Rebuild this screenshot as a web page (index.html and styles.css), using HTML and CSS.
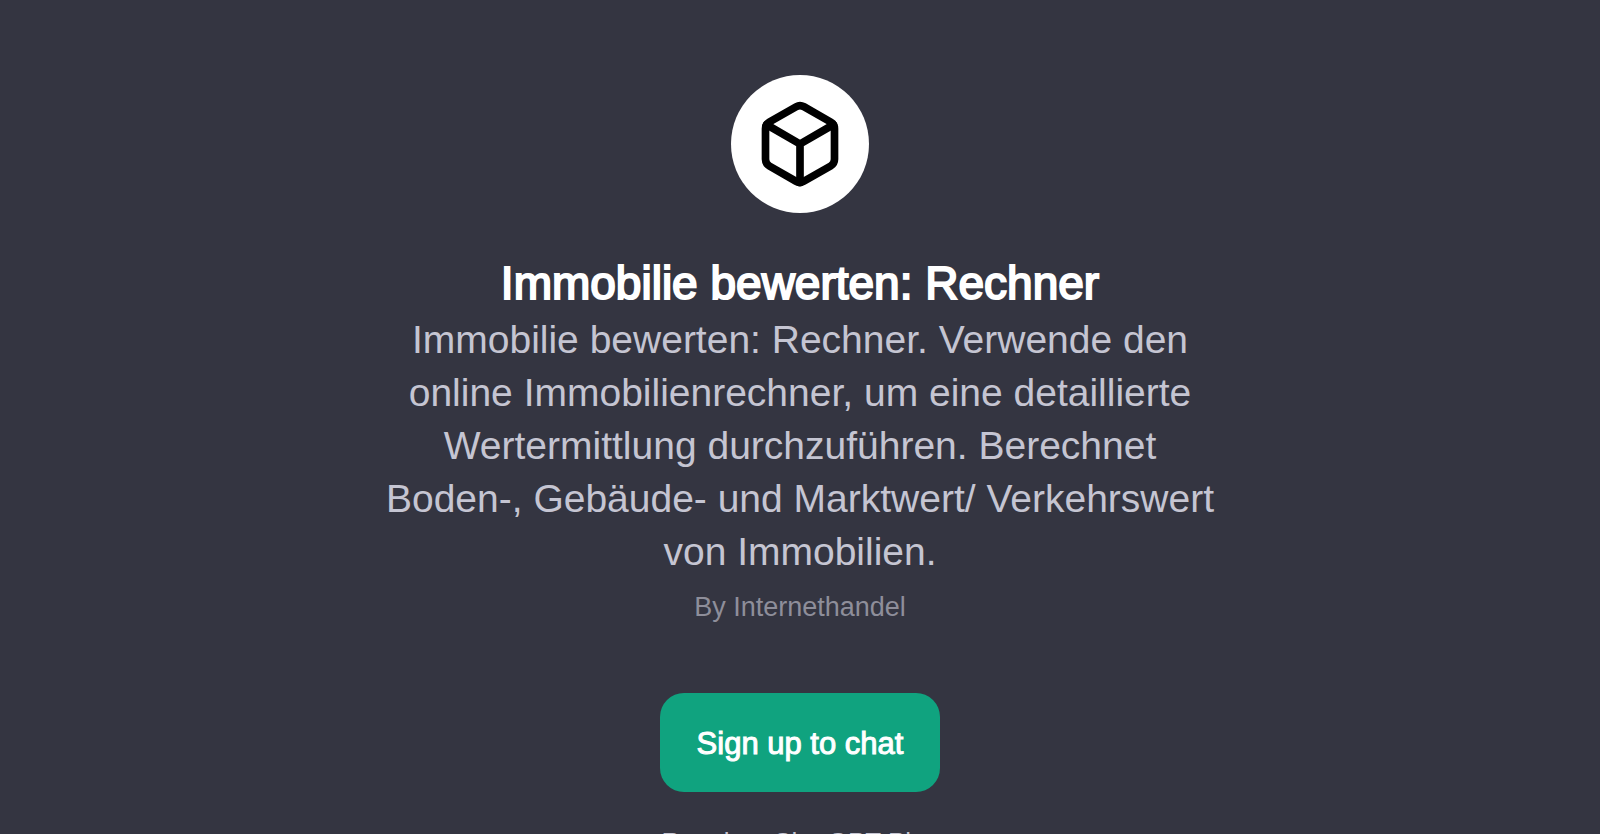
FILE: index.html
```html
<!DOCTYPE html>
<html lang="de">
<head>
<meta charset="utf-8">
<meta name="viewport" content="width=device-width, initial-scale=1">
<title>Immobilie bewerten: Rechner</title>
<link rel="stylesheet" href="styles.css">
</head>
<body>
<main class="page">
  <div class="avatar">
    <svg class="avatar-icon" viewBox="0 0 24 24" fill="none" stroke="currentColor" stroke-width="2" stroke-linecap="round" stroke-linejoin="round" aria-hidden="true">
      <path d="M21 16V8a2 2 0 0 0-1-1.73l-7-4a2 2 0 0 0-2 0l-7 4A2 2 0 0 0 3 8v8a2 2 0 0 0 1 1.73l7 4a2 2 0 0 0 2 0l7-4A2 2 0 0 0 21 16z"/>
      <path d="M3.27 6.96 12 12.01l8.73-5.05M12 22.08V12"/>
    </svg>
  </div>
  <h1 class="title">Immobilie bewerten: Rechner</h1>
  <p class="description">Immobilie bewerten: Rechner. Verwende den online Immobilienrechner, um eine detaillierte Wertermittlung durchzuführen. Berechnet Boden-, Gebäude- und Marktwert/ Verkehrswert von Immobilien.</p>
  <p class="author">By Internethandel</p>
  <button class="signup" type="button">Sign up to chat</button>
  <p class="note">Requires ChatGPT Plus</p>
</main>
</body>
</html>
```
FILE: styles.css
```css
* {
  box-sizing: border-box;
}

html {
  height: 100%;
  overflow: hidden;
}

body {
  height: 100%;
  margin: 0;
  overflow: hidden;
  background: #343541;
  color: #fff;
  font-family: "Liberation Sans", Arial, sans-serif;
}

.page {
  display: flex;
  flex-direction: column;
  align-items: center;
  padding: 75px 24px 0;
  text-align: center;
}

.avatar {
  display: flex;
  align-items: center;
  justify-content: center;
  width: 138px;
  height: 138px;
  border-radius: 50%;
  background: #fff;
  color: #000;
}

.avatar-icon {
  width: 92px;
  height: 92px;
}

.title {
  margin: 40px 0 0;
  font-size: 46px;
  font-weight: 400;
  line-height: 60px;
  -webkit-text-stroke: 2px currentColor;
}

.description {
  max-width: 856px;
  margin: 0;
  color: #c5c5d2;
  font-size: 39px;
  line-height: 53px;
}

.author {
  margin: 0;
  color: #8e8e9a;
  font-size: 27px;
  line-height: 58px;
}

.signup {
  margin: 57px 0 0;
  padding: 33px 37px 31px;
  border: 0;
  border-radius: 24px;
  background: #10a37f;
  color: #fff;
  font-family: inherit;
  font-size: 31px;
  line-height: 35px;
  -webkit-text-stroke: 1px currentColor;
}

.note {
  margin: 32px 0 0;
  color: #c5c5d2;
  font-size: 26px;
  line-height: 36px;
}
```
